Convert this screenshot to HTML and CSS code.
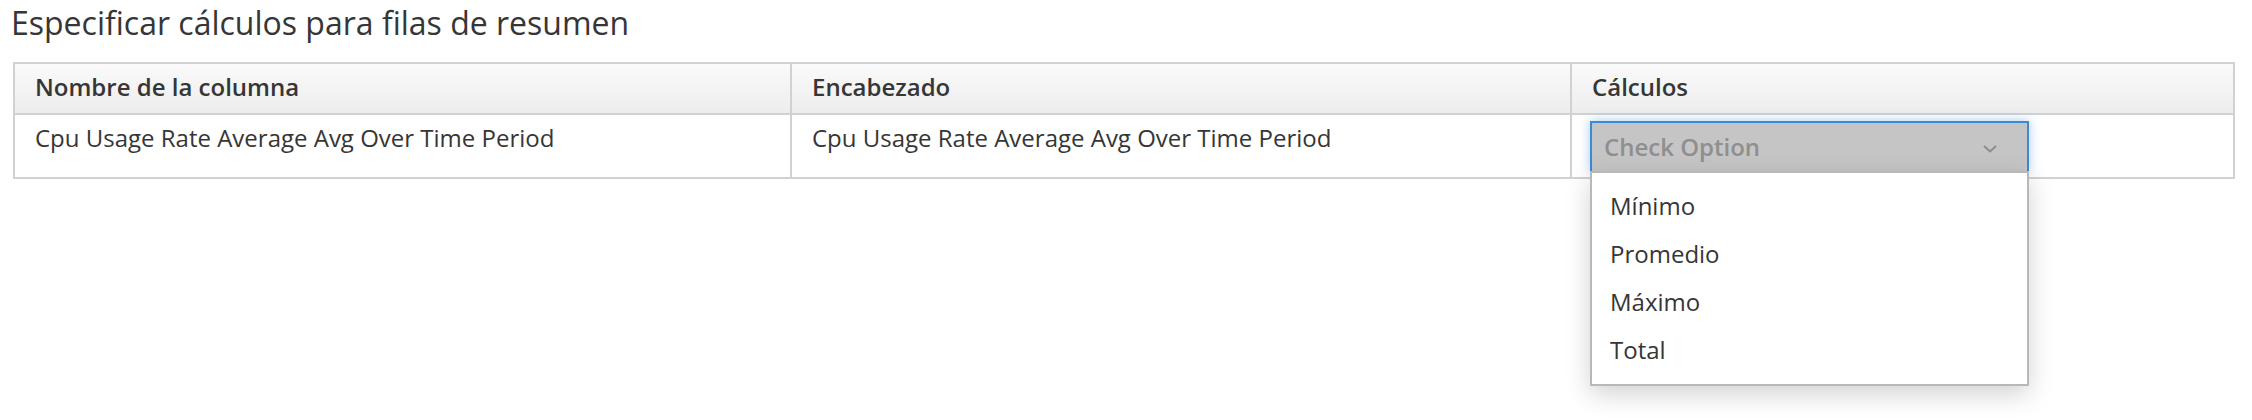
FILE: index.html
```html
<!DOCTYPE html>
<html lang="es">
<head>
<meta charset="utf-8">
<title>Especificar cálculos</title>
<link rel="stylesheet" href="styles.css">
</head>
<body>
<div class="page">
  <h3 class="title">Especificar cálculos para filas de resumen</h3>
  <table class="calc-table">
    <colgroup>
      <col class="col-name">
      <col class="col-header">
      <col class="col-calc">
    </colgroup>
    <thead>
      <tr>
        <th>Nombre de la columna</th>
        <th>Encabezado</th>
        <th>Cálculos</th>
      </tr>
    </thead>
    <tbody>
      <tr>
        <td>Cpu Usage Rate Average Avg Over Time Period</td>
        <td>Cpu Usage Rate Average Avg Over Time Period</td>
        <td class="calc-cell">
          <div class="select">
            <button class="select-btn" type="button">
              <span class="select-label">Check Option</span>
              <svg class="caret" width="14" height="8" viewBox="0 0 14 8" aria-hidden="true">
                <path d="M1 1 L7 6.5 L13 1" fill="none" stroke="#8c8c8c" stroke-width="2"/>
              </svg>
            </button>
            <ul class="menu">
              <li>Mínimo</li>
              <li>Promedio</li>
              <li>Máximo</li>
              <li>Total</li>
            </ul>
          </div>
        </td>
      </tr>
    </tbody>
  </table>
</div>
</body>
</html>
```
FILE: styles.css
```css
html, body {
  margin: 0;
  padding: 0;
  background: #ffffff;
  min-height: 420px;
}

body {
  font-family: "Open Sans", "Liberation Sans", sans-serif;
  color: #363636;
}

.page {
  padding: 5px 17px 0 13px;
  min-height: 415px;
}

.title {
  margin: 0 0 21px -2px;
  font-size: 32px;
  line-height: 36px;
  font-weight: 400;
  color: #363636;
}

.calc-table {
  width: 2222px;
  border-collapse: collapse;
  table-layout: fixed;
  border: 2px solid #d1d1d1;
}

.col-name { width: 777px; }
.col-header { width: 780px; }

.calc-table th,
.calc-table td {
  border: 2px solid #d1d1d1;
  text-align: left;
  font-size: 24px;
  line-height: 34px;
}

.calc-table th {
  font-weight: 600;
  padding: 6px 20px 9px;
  background: linear-gradient(#fafafa, #ededed);
  color: #363636;
}

.calc-table td {
  font-weight: 400;
  padding: 6px 20px;
  vertical-align: top;
}

.calc-table td.calc-cell {
  padding-left: 18px;
  overflow: visible;
}

.select {
  position: relative;
  width: 439px;
}

.select-btn {
  display: flex;
  align-items: center;
  justify-content: space-between;
  box-sizing: border-box;
  width: 439px;
  height: 50px;
  margin: 0;
  padding: 0 30px 0 12px;
  border: 2px solid #3a8ad6;
  border-bottom: 0;
  background: #c5c5c5;
  font-family: "Open Sans", "Liberation Sans", sans-serif;
  font-size: 24px;
  font-weight: 600;
  color: #8f8f8f;
  box-shadow: 0 0 10px rgba(58, 138, 214, 0.45);
  text-align: left;
}

.select-label {
  line-height: 34px;
}

.caret {
  display: block;
  margin-top: 4px;
}

.menu {
  position: absolute;
  left: 0;
  top: 50px;
  box-sizing: border-box;
  width: 439px;
  height: 215px;
  margin: 0;
  padding: 9px 0 10px;
  list-style: none;
  background: #ffffff;
  border: 2px solid #b8b8b8;
  box-shadow: 0 8px 24px rgba(0, 0, 0, 0.18);
  z-index: 5;
}

.menu li {
  display: block;
  padding: 0 18px;
  font-size: 24px;
  line-height: 48px;
  color: #363636;
}
```
